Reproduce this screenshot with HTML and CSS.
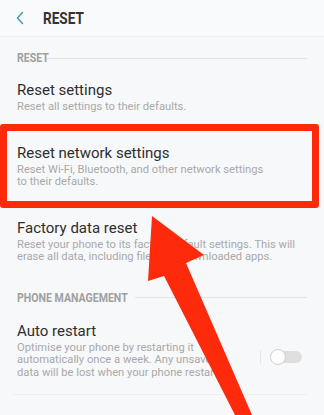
FILE: index.html
```html
<!DOCTYPE html>
<html>
<head>
<meta charset="utf-8">
<link rel="stylesheet" href="styles.css">
</head>
<body>
<div class="screen">
  <header class="appbar">
    <svg class="back" width="10" height="14" viewBox="0 0 10 14"><path d="M7.5 1.5 L2.5 7 L7.5 12.5" fill="none" stroke="#4b9bc1" stroke-width="1.6" stroke-linecap="round" stroke-linejoin="round"/></svg>
    <span class="title">RESET</span>
  </header>

  <div class="section-label"><span>RESET</span><i class="rule"></i></div>

  <div class="item">
    <div class="item-title">Reset settings</div>
    <div class="item-sub">Reset all settings to their defaults.</div>
  </div>

  <div class="item">
    <div class="item-title">Reset network settings</div>
    <div class="item-sub">Reset Wi-Fi, Bluetooth, and other network settings<br>to their defaults.</div>
  </div>

  <div class="item">
    <div class="item-title">Factory data reset</div>
    <div class="item-sub">Reset your phone to its factory default settings. This will<br>erase all data, including files and downloaded apps.</div>
  </div>

  <div class="section-label second"><span>PHONE MANAGEMENT</span><i class="rule"></i></div>

  <div class="item switch-item">
    <div class="item-text">
      <div class="item-title">Auto restart</div>
      <div class="item-sub">Optimise your phone by restarting it<br>automatically once a week. Any unsaved<br>data will be lost when your phone restarts.</div>
    </div>
    <i class="vdiv"></i>
    <span class="toggle"><span class="knob"></span></span>
  </div>
  <div class="bottom-rule"></div>

  <div class="highlight"></div>
  <svg class="arrow" width="324" height="415" viewBox="0 0 324 415">
    <polygon points="152,216 204,255 186,263 252,415 235,415 164,276 148,281" fill="#fe2a0c"/>
  </svg>
</div>
</body>
</html>
```

FILE: styles.css
```css
html, body {
  margin: 0;
  padding: 0;
}
body {
  background: #f7f8fa;
  font-family: Roboto, "Noto Sans", sans-serif;
  color: #2b2b2b;
}
.screen {
  position: relative;
  width: 324px;
  height: 415px;
  overflow: hidden;
}
.appbar {
  height: 36px;
  display: flex;
  align-items: center;
  border-bottom: 1px solid #eceef1;
  background: #f9fafb;
}
.back {
  margin-left: 15px;
}
.title {
  display: inline-block;
  margin-left: 18px;
  font-size: 17px;
  font-weight: 700;
  color: #333;
  transform: scaleX(0.8);
  transform-origin: left center;
}
.section-label {
  display: flex;
  align-items: center;
  padding: 14px 17px 0 17px;
  height: 14px;
  font-size: 12px;
  font-weight: 700;
  color: #a0a0a0;
}
.section-label span {
  display: inline-block;
  transform: scaleX(0.88);
  transform-origin: left center;
  white-space: nowrap;
}
.section-label .rule {
  flex: 1;
  height: 1px;
  background: #e2e3e5;
  margin-left: -8px;
}
.section-label:first-child .rule {
  margin-left: 4px;
}
.section-label.second {
  padding-top: 13px;
}
.item {
  padding: 16px 17px 14px 17px;
}
.item-title {
  font-size: 15px;
  line-height: 19px;
  color: #2e2e2e;
}
.item-sub {
  font-size: 11.2px;
  line-height: 12.5px;
  color: #a9a9a9;
  margin-top: 1px;
}
.switch-item {
  display: flex;
  align-items: center;
  padding-top: 17px;
  padding-bottom: 15px;
}
.item-text {
  flex: 1;
}
.vdiv {
  width: 1px;
  height: 14px;
  background: #e6e6e6;
  margin-right: 10px;
  margin-top: 14px;
}
.toggle {
  position: relative;
  width: 31px;
  height: 12px;
  border-radius: 6px;
  background: #dedede;
  margin-top: 14px;
  margin-right: 5px;
}
.knob {
  position: absolute;
  left: -1px;
  top: -2px;
  width: 14px;
  height: 14px;
  border-radius: 50%;
  background: #fff;
  border: 1px solid #cfcfcf;
}
.bottom-rule {
  height: 1px;
  margin: 0 17px 0 13px;
  background: #eceef0;
}
.highlight {
  position: absolute;
  left: 0;
  top: 124px;
  width: 305px;
  height: 70px;
  border: 7px solid #fe2a0c;
  border-radius: 3px;
}
.arrow {
  position: absolute;
  left: 0;
  top: 0;
}
```
